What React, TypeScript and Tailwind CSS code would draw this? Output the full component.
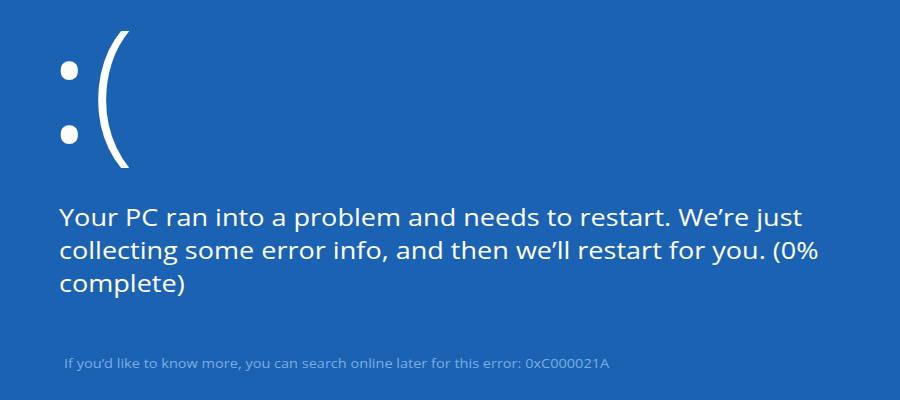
export default function App() {
  return (
    <div className="w-[900px] h-[400px] bg-[#1b62b3] overflow-hidden text-white" style={{ fontFamily: '"Open Sans", "Noto Sans", sans-serif' }}>
      <div className="h-[200px] pl-[50px] pt-[4px]">
        <div className="flex items-baseline leading-none">
          <span className="text-[147px] font-medium -translate-y-[1px]">:</span>
          <span className="text-[157px] font-light ml-[3px]">(</span>
        </div>
      </div>
      <div className="pl-[59px]">
        <div className="text-[24px] leading-[33px] whitespace-nowrap origin-left scale-x-[1.127]">
          <div>Your PC ran into a problem and needs to restart. We’re just</div>
          <div>collecting some error info, and then we’ll restart for you. (0%</div>
          <div>complete)</div>
        </div>
      </div>
      <div className="pl-[64px] mt-[55px] text-[13px] leading-[18px] text-[#7aaee2] whitespace-nowrap">
        <div className="origin-left scale-x-[1.117]">If you’d like to know more, you can search online later for this error: 0xC000021A</div>
      </div>
    </div>
  );
}
